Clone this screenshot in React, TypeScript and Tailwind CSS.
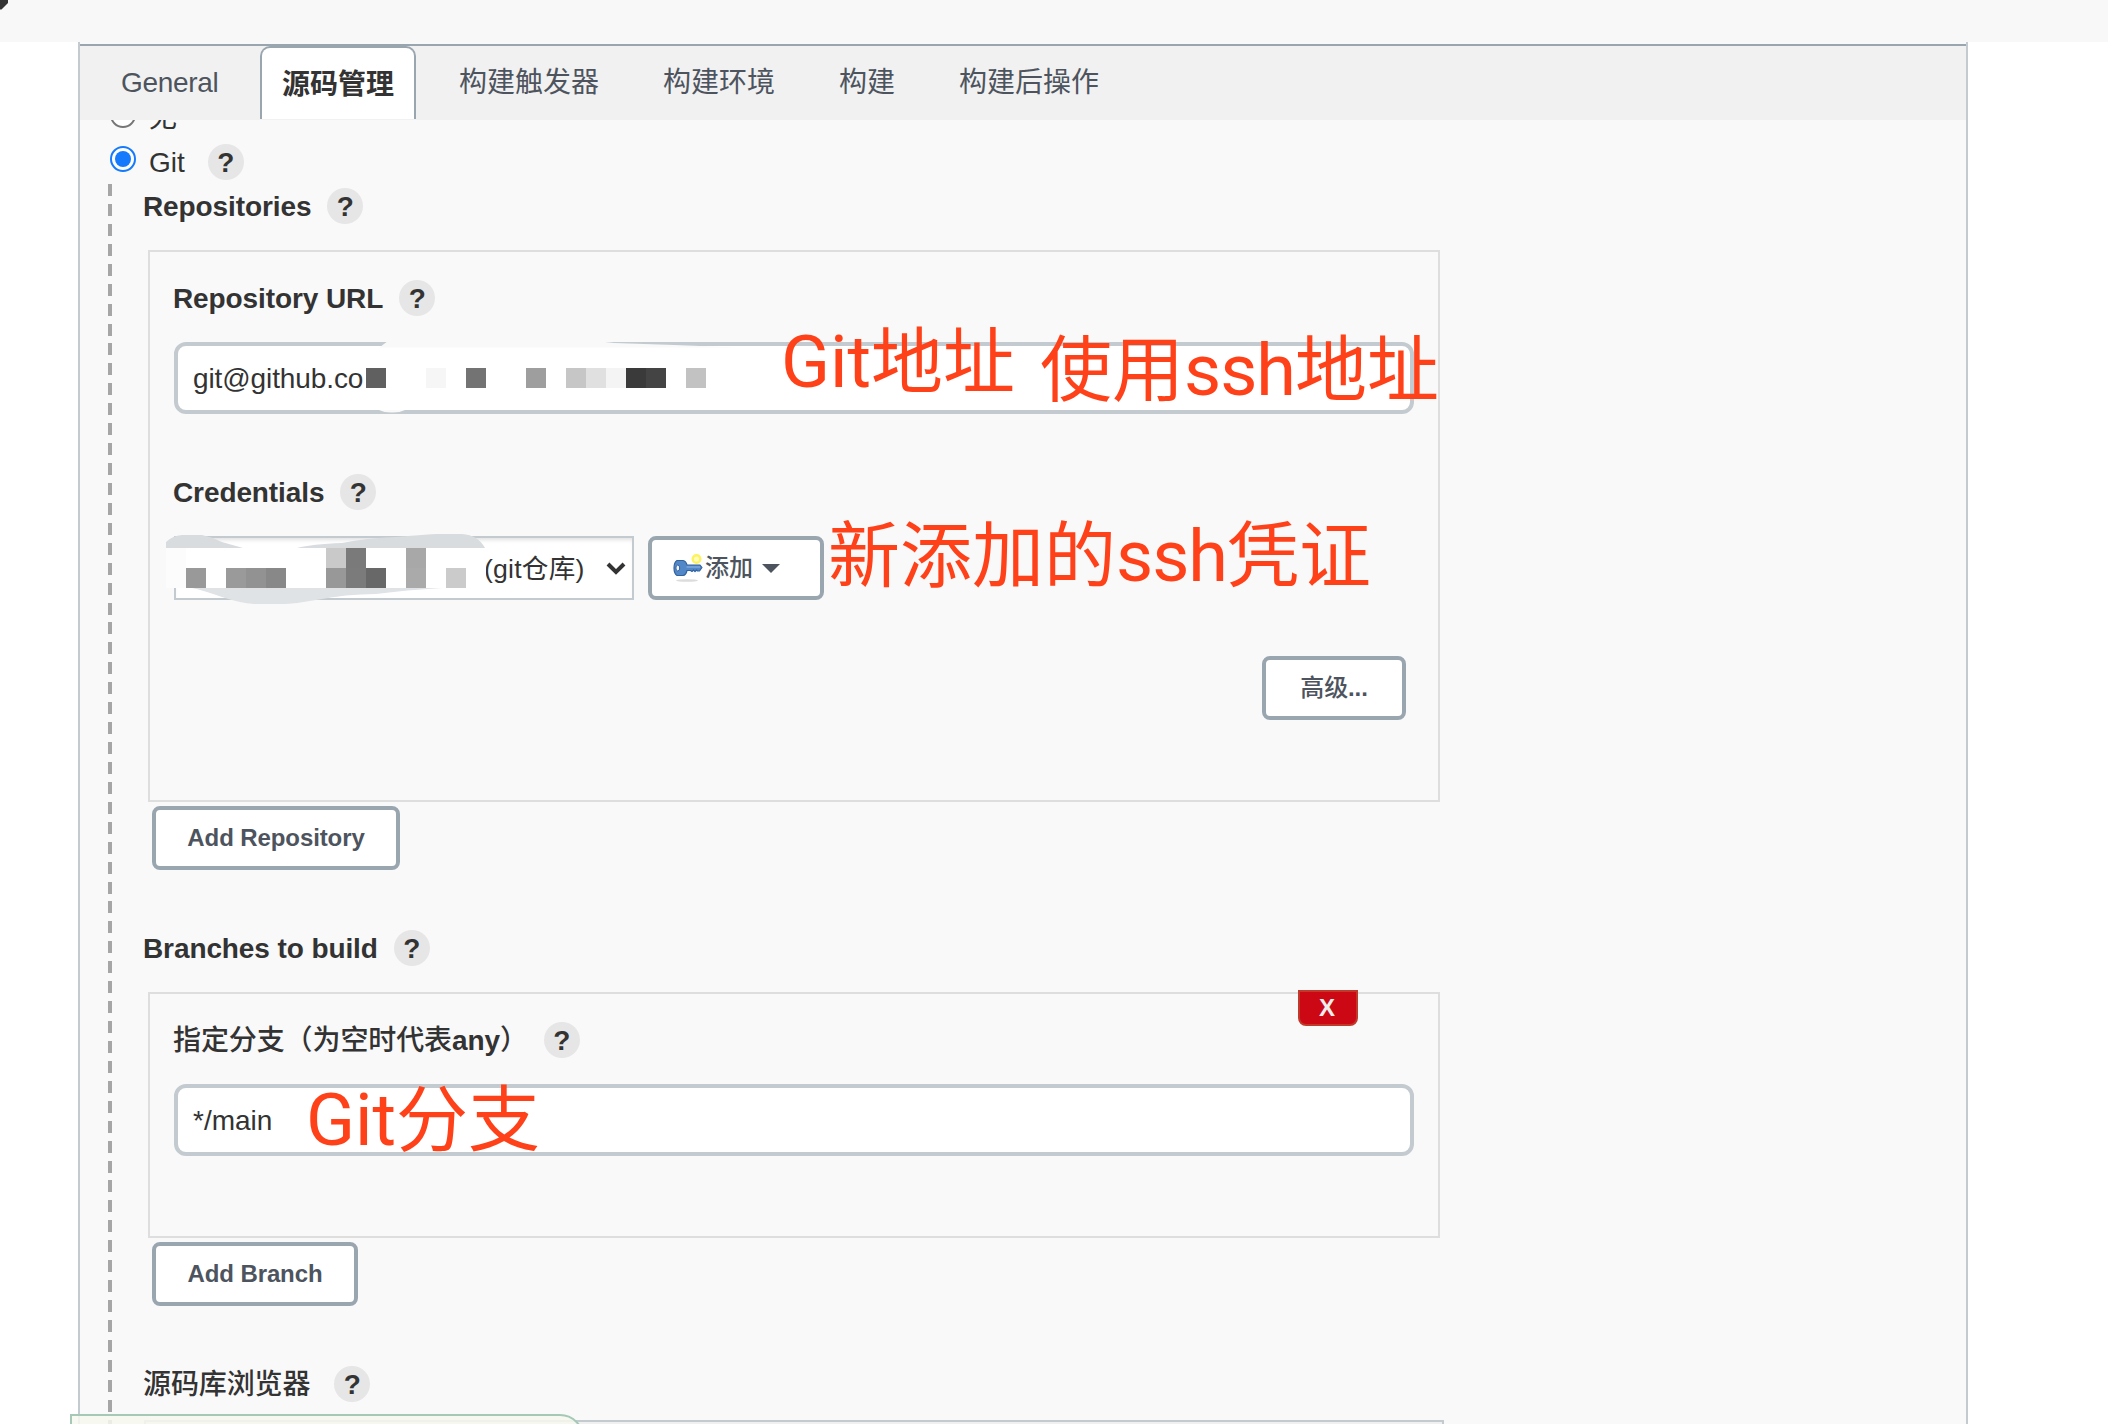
import React from "react";

const sans = "font-['Liberation_Sans','Noto_Sans_CJK_SC',sans-serif]";

function Help({ className = "" }: { className?: string }) {
  return (
    <span
      className={`flex h-9 w-9 shrink-0 items-center justify-center rounded-full bg-[#e6e6e6] pt-px text-[28px] leading-9 font-bold text-[#333] ${className}`}
    >
      ?
    </span>
  );
}

function Label({ children, gap = "gap-4" }: { children: React.ReactNode; gap?: string }) {
  return (
    <div className={`flex h-9 items-center text-[28px] leading-9 font-bold whitespace-nowrap text-[#333] ${gap}`}>
      <span className="pt-0.5 tracking-[-0.1px]">{children}</span>
      <Help />
    </div>
  );
}

function Button({ children, className = "" }: { children: React.ReactNode; className?: string }) {
  return (
    <button
      className={`flex h-16 items-center justify-center rounded-lg border-4 border-[#9aa6af] bg-white text-2xl leading-none font-bold tracking-[-0.1px] whitespace-nowrap text-[#4d545e] ${className}`}
    >
      {children}
    </button>
  );
}

function Note({ children, className }: { children: React.ReactNode; className: string }) {
  return (
    <div
      className={`absolute font-['Roboto','Noto_Sans_CJK_SC',sans-serif] text-[72px] leading-none whitespace-nowrap text-[#ff4119] ${className}`}
    >
      {children}
    </div>
  );
}

const urlBlocks: [number, string][] = [
  [0, "#606060"],
  [60, "#f6f6f6"],
  [100, "#737373"],
  [160, "#9e9e9e"],
  [200, "#c6c6c6"],
  [220, "#e0e0e0"],
  [240, "#f4f4f4"],
  [260, "#3a3a3a"],
  [280, "#444444"],
  [320, "#c2c2c2"],
];

const credBlocks: [number, number, string][] = [
  [0, 0, "#fcfcfc"],
  [8, 0, "#c9c9c9"],
  [9, 0, "#7a7a7a"],
  [12, 0, "#a8a8a8"],
  [0, 1, "#fcfcfc"],
  [1, 1, "#999999"],
  [3, 1, "#9a9a9a"],
  [4, 1, "#929292"],
  [5, 1, "#888888"],
  [8, 1, "#989898"],
  [9, 1, "#7b7b7b"],
  [10, 1, "#686868"],
  [12, 1, "#aaaaaa"],
  [14, 1, "#cbcbcb"],
];

function UrlMask() {
  return (
    <svg className="absolute -top-1 -left-1 h-[72px] w-[600px]" viewBox="0 0 600 72">
      <path d="M206 5 L214 -1 H422 L440 1 L500 3 L565 5.5 H206z" fill="#f9f9f9" />
      <path d="M205 68 H231 Q226 70.5 218 70.5 Q210 70.5 205 68z" fill="#f9f9f9" />
      {urlBlocks.map(([x, c]) => (
        <rect key={x} x={192 + x} y="26" width="20" height="20" fill={c} />
      ))}
    </svg>
  );
}

function CredMask() {
  return (
    <svg className="absolute top-[-5px] left-[-10px] h-[72px] w-[320px]" viewBox="0 0 320 72">
      <path d="M0 9 Q6 3 16 2 H36 Q46 4 56 9 L77 15 H0z" fill="#d8dcdf" />
      <path d="M131 15 Q146 11 176 10 Q200 5 230 4 Q255 2 270 1 H296 Q312 2 319 15z" fill="#d8dcdf" />
      <path d="M26 55 Q36 57 56 64 Q74 70 88 71 H120 Q134 70 150 67 Q180 61 210 61 Q240 57 276 55z" fill="#dfe3e6" />
      <rect x="0" y="15" width="320" height="40" fill="#fff" />
      {credBlocks.map(([c, r, color]) => (
        <rect key={`${c}-${r}`} x={c * 20} y={15 + r * 20} width="20" height="20" fill={color} />
      ))}
    </svg>
  );
}

function KeyIcon() {
  return (
    <svg className="h-8 w-8 shrink-0" viewBox="0 0 32 32">
      <ellipse cx="15" cy="28.500" rx="11" ry="1.300" fill="#dcdcdc" />
      <circle cx="24.500" cy="7" r="3.800" fill="#fffbb8" stroke="#fdf35e" strokeWidth="2.400" />
      <path
        d="M5 8.500H11Q14 9 15 13H28L30 15.500L27.500 19H25.500L24.500 18L23 19.500L21.500 18L20 19.500L18.500 18.500H15Q14 23 11 23.500H5Q2 21.500 2 16T5 8.500z"
        fill="#5288c7"
        stroke="#33639f"
        strokeWidth="1.200"
        strokeLinejoin="round"
      />
      <path d="M14.500 15H28" stroke="#86addc" strokeWidth="1.300" />
      <ellipse cx="5.800" cy="16" rx="1.900" ry="3" fill="#f0f5fb" stroke="#33639f" strokeWidth="1" />
    </svg>
  );
}

export default function App() {
  return (
    <div className={`relative h-[1424px] w-[2108px] overflow-hidden bg-white ${sans}`}>
      <header className="h-[42px] bg-[#f8f8f8]">
        <svg className="h-3 w-3" viewBox="0 0 12 12">
          <path d="M0 0H8V3L1.500 9.500H0z" fill="#333" />
        </svg>
      </header>

      <main className="ml-[78px] flex h-[1382px] w-[1890px] flex-col border-x-2 border-[#c3cbd0] bg-[#f9f9f9]">
        <nav className="mt-0.5 flex h-[76px] shrink-0 border-t-2 border-[#9aa6af] bg-[#f1f1f1] text-[28px] leading-[74px] whitespace-nowrap text-[#4d545e]">
          <div className="w-[180px] pl-[41px] tracking-[-0.3px]">General</div>
          <div className="h-[73px] w-[156px] rounded-t-[10px] border-2 border-b-0 border-[#9aa6af] bg-white text-center leading-[74px] font-bold text-[#333]">
            源码管理
          </div>
          <div className="ml-[11px] px-8">构建触发器</div>
          <div className="px-8">构建环境</div>
          <div className="px-8">构建</div>
          <div className="px-8">构建后操作</div>
        </nav>

        <section className="flex min-h-0 flex-1 flex-col overflow-hidden pl-7 text-[#333]">
          <div className="-mt-5 flex h-9 shrink-0 items-center [clip-path:inset(20px_0_0_0)]">
            <span className="-mt-[6px] ml-[2px] h-[26px] w-[26px] rounded-full border-2 border-[#767676] bg-white" />
            <span className="ml-[13px] text-[28px] leading-9">无</span>
          </div>
          <div className="mt-2 flex h-9 shrink-0 items-center">
            <span className="-mt-[6px] ml-[2px] flex h-[26px] w-[26px] items-center justify-center rounded-full border-2 border-[#157afb] bg-white">
              <span className="h-4 w-4 rounded-full bg-[#157afb]" />
            </span>
            <span className="ml-[13px] pt-0.5 text-[28px] leading-9">Git</span>
            <Help className="ml-[23px]" />
          </div>

          <div className="mt-1 flex min-h-0 flex-1">
            <div className="w-1 shrink-0 bg-[repeating-linear-gradient(to_bottom,#a6a6a6_0,#a6a6a6_12px,transparent_12px,transparent_19.93px)]" />
            <div className="flex w-[1332px] shrink-0 flex-col pt-1 pl-8">
              <div className="-ml-[1px]">
                <Label gap="gap-4">Repositories</Label>
              </div>

              <div className="mt-[26px] ml-1 h-[552px] w-[1292px] shrink-0 border-2 border-[#dedede] px-6 pt-7">
                <div className="-ml-[1px]">
                  <Label gap="gap-4">Repository URL</Label>
                </div>
                <div className="relative mt-[26px] flex h-[72px] w-[1240px] items-center rounded-xl border-4 border-[#c3cbd0] bg-white pt-px pl-[15px] text-[28px] tracking-[-0.1px]">
                  git@github.co
                  <UrlMask />
                </div>
                <div className="mt-[60px] -ml-[1px]">
                  <Label gap="gap-4">Credentials</Label>
                </div>
                <div className="mt-[26px] flex gap-[14px]">
                  <div className="relative flex h-16 w-[460px] items-center border-2 border-[#c3cbd0] bg-white pl-[308px] text-[26.67px] whitespace-nowrap shadow-[inset_0_4px_4px_-2px_rgba(0,0,0,0.12)]">
                    <span className="pt-px tracking-[0.2px]">(git仓库)</span>
                    <CredMask />
                    <svg className="ml-[19px] h-5 w-6" viewBox="0 0 24 20">
                      <path d="M4 6l8 8 8-8" fill="none" stroke="#333" strokeWidth="4" />
                    </svg>
                  </div>
                  <button className="flex h-16 w-[176px] items-center rounded-lg border-4 border-[#9aa6af] bg-white pl-5 text-2xl leading-none font-medium text-[#4d545e]">
                    <KeyIcon />
                    <span className="ml-px">添加</span>
                    <svg className="ml-[9px] h-[9px] w-[18px]" viewBox="0 0 18 9">
                      <path d="M0 0H18L9 9z" fill="#4d545e" />
                    </svg>
                  </button>
                </div>
                <div className="mt-14 flex justify-end pr-2">
                  <Button className="w-36">
                    <span className="font-medium">高级</span>...
                  </Button>
                </div>
              </div>
              <Button className="mt-1 ml-2 w-[248px] shrink-0">Add Repository</Button>

              <div className="mt-[60px] -ml-[1px]">
                <Label gap="gap-4">Branches to build</Label>
              </div>
              <div className="relative mt-[26px] ml-1 h-[246px] w-[1292px] shrink-0 border-2 border-[#dedede] px-6 pt-7">
                <div className="absolute -top-1 right-20 flex h-9 w-[60px] items-center justify-center rounded-b-lg border-2 border-[#c0392b] bg-[#cc0814] pr-0.5 text-2xl leading-none font-bold text-[#eee]">
                  X
                </div>
                <div className="-ml-[1px]">
                  <Label gap="gap-4">
                    <span className="font-medium">指定分支（为空时代表</span>any<span className="font-medium">）</span>
                  </Label>
                </div>
                <div className="mt-[26px] flex h-[72px] w-[1240px] items-center rounded-xl border-4 border-[#c3cbd0] bg-white pt-px pl-[15px] text-[28px]">
                  */main
                </div>
              </div>
              <Button className="mt-1 ml-2 w-[206px] shrink-0">Add Branch</Button>

              <div className="mt-[60px] -ml-[1px]">
                <Label gap="gap-6">
                  <span className="font-medium">源码库浏览器</span>
                </Label>
              </div>
              <div className="mt-[18px] h-10 w-[1300px] shrink-0 border-2 border-[#c3cbd0] bg-[#f0f0f0]" />
            </div>
          </div>
        </section>
      </main>

      <div className="absolute top-[1414px] left-[70px] h-16 w-[514px] rounded-tr-[24px] border-2 border-[#a6c9b7] bg-[#f7f8ee]/85" />

      <Note className="top-[327px] left-[781px]">Git地址</Note>
      <Note className="top-[335px] left-[1040px]">
        使用<span className="tracking-[-1px]">ssh</span>地址
      </Note>
      <Note className="top-[521px] left-[828px]">
        新添加的<span className="tracking-[-1px]">ssh</span>凭证
      </Note>
      <Note className="top-[1085px] left-[306px]">Git分支</Note>
    </div>
  );
}
